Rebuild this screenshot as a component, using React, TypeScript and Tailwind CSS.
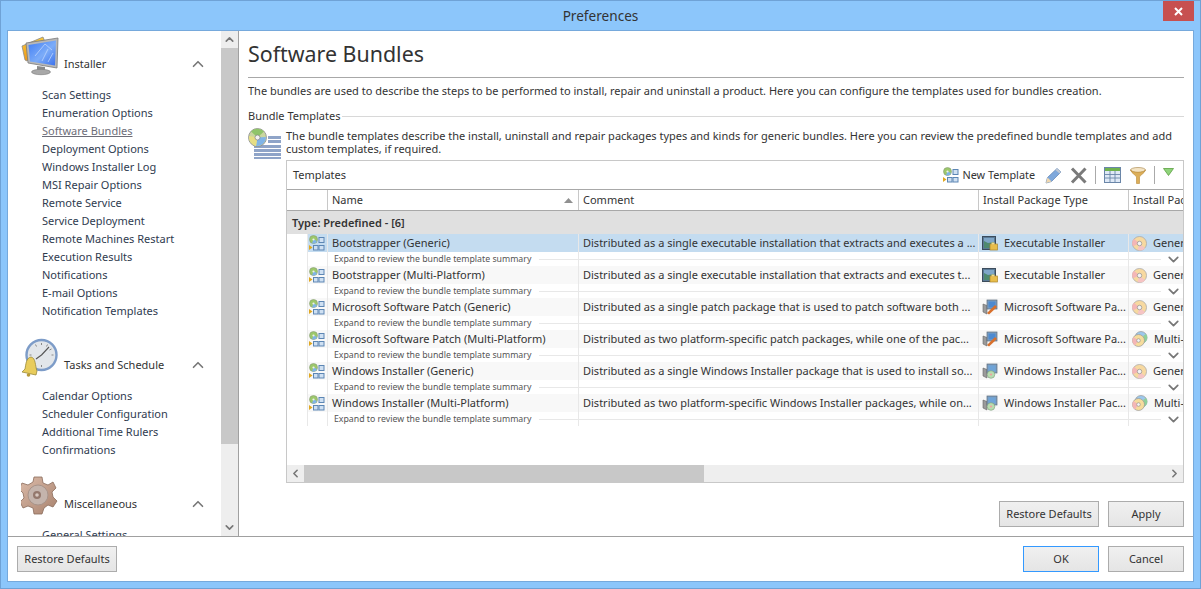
import { ChevronDown, ChevronLeft, ChevronRight, ChevronUp } from "lucide-react";

function Disc({ size = 16 }: { size?: number }) {
  return (
    <svg width={size} height={size} viewBox="0 0 16 16" className="shrink-0">
      <circle cx="8" cy="8" r="7.5" fill="#f7d9a0" stroke="#a8a8a8" strokeWidth="0.8" />
      <path d="M8 8 L2 3 A7.5 7.5 0 0 0 1 11 Z" fill="#f4b6b6" />
      <path d="M8 8 L14 13 A7.5 7.5 0 0 1 6 15 Z" fill="#f6c4c4" />
      <circle cx="8" cy="8" r="2.4" fill="#f4f4f4" stroke="#8a8a8a" strokeWidth="0.7" />
    </svg>
  );
}

function MultiDisc() {
  return (
    <svg width="16" height="16" viewBox="0 0 16 16" className="shrink-0">
      <circle cx="9" cy="6.5" r="6" fill="#9cc8ec" stroke="#9a9a9a" strokeWidth="0.7" />
      <path d="M9 6.5 L14 3 A6 6 0 0 1 12 12 Z" fill="#8fd09a" />
      <circle cx="6.5" cy="9.5" r="6" fill="#f6dc9c" stroke="#9a9a9a" strokeWidth="0.7" />
      <path d="M6.5 9.5 L1.5 6 A6 6 0 0 0 3 14.5 Z" fill="#f4b6b6" />
      <circle cx="6.5" cy="9.5" r="1.8" fill="#f4f4f4" stroke="#8a8a8a" strokeWidth="0.6" />
    </svg>
  );
}

function BundleIcon() {
  return (
    <svg width="17" height="16" viewBox="0 0 17 16" className="shrink-0">
      <circle cx="5.5" cy="4.5" r="4" fill="#9cc86a" stroke="#8a9a7a" strokeWidth="0.6" />
      <path d="M5.5 4.5 L9 6 A4 4 0 0 1 4 8.2 Z" fill="#7fb4e8" />
      <circle cx="5.5" cy="4.5" r="1.1" fill="#eee" />
      <rect x="11" y="2.5" width="5" height="5" fill="#cfe0f2" stroke="#5c86b4" />
      <path d="M1 10 L1 15 L4.5 12.5 Z" fill="#e0a820" />
      <rect x="5.5" y="10.5" width="4.5" height="4.5" fill="#cfe0f2" stroke="#5c86b4" />
      <rect x="11" y="10.5" width="5" height="4.5" fill="#cfe0f2" stroke="#5c86b4" />
    </svg>
  );
}

function ExeIcon() {
  return (
    <svg width="16" height="16" viewBox="0 0 16 16" className="shrink-0">
      <rect x="0.5" y="1.5" width="13" height="13" fill="#5a7a96" stroke="#3c4c5c" />
      <rect x="2" y="3" width="10" height="10" fill="#4f8a70" />
      <path d="M2 3 H12 V7 L6 8 L2 6 Z" fill="#7fa6c8" />
      <rect x="8" y="9" width="7.5" height="6" fill="#e8bd4a" stroke="#a8842c" strokeWidth="0.7" />
      <rect x="9.5" y="7.5" width="3" height="2" fill="#f4d98a" />
    </svg>
  );
}

function PatchIcon() {
  return (
    <svg width="16" height="16" viewBox="0 0 16 16" className="shrink-0">
      <path d="M1 5 L5 6.5 L5 15 L1 13 Z" fill="#9a9a9a" stroke="#666" strokeWidth="0.6" />
      <rect x="5" y="1" width="10" height="9" fill="#7d9ec0" stroke="#5c6c7c" strokeWidth="0.7" />
      <rect x="6.5" y="2.5" width="7" height="6" fill="#4d8ad0" />
      <path d="M5 14 L13 6 L15 8 L7 15.5 Z" fill="#d8702c" />
    </svg>
  );
}

function MsiIcon() {
  return (
    <svg width="16" height="16" viewBox="0 0 16 16" className="shrink-0">
      <path d="M1 5 L5 6.5 L5 15 L1 13 Z" fill="#9a9a9a" stroke="#666" strokeWidth="0.6" />
      <rect x="5" y="1" width="10" height="9" fill="#7d9ec0" stroke="#5c6c7c" strokeWidth="0.7" />
      <rect x="6.5" y="2.5" width="7" height="6" fill="#6fa4d8" />
      <circle cx="9" cy="11.5" r="3.8" fill="#b8dcb0" stroke="#7a9a7a" strokeWidth="0.6" />
      <circle cx="9" cy="11.5" r="1.1" fill="#f0a0a0" />
    </svg>
  );
}

function MonitorIcon() {
  return (
    <svg width="40" height="40" viewBox="0 0 40 40" className="shrink-0">
      <defs>
        <linearGradient id="screen" x1="0" y1="0" x2="1" y2="1">
          <stop offset="0" stopColor="#3f7cf4" />
          <stop offset="0.55" stopColor="#7cacf8" />
          <stop offset="1" stopColor="#3a70ec" />
        </linearGradient>
        <linearGradient id="back" x1="0" y1="0" x2="0" y2="1">
          <stop offset="0" stopColor="#f8c83a" />
          <stop offset="1" stopColor="#f09a18" />
        </linearGradient>
      </defs>
      <path d="M1 10 L22 1 L24 6 L6 25 L4 24 Z" fill="url(#back)" stroke="#8a8a8a" strokeWidth="0.8" />
      <path d="M5 7 L37 2 L36 32 L7 27 Z" fill="#b8b8b8" stroke="#7a7a7a" strokeWidth="0.8" />
      <path d="M7.5 9 L35 4.5 L34 29.5 L9 25.5 Z" fill="url(#screen)" />
      <path d="M14 20 L24 8 L31 14 M21 25 L27 13 M27 26 L32 17" stroke="#bcd4fc" strokeWidth="0.8" fill="none" />
      <path d="M16 30 L24 31 L24 35 L16 35 Z" fill="#8a8a8a" />
      <ellipse cx="20" cy="36" rx="9.5" ry="2.7" fill="#a8a8a8" stroke="#7a7a7a" strokeWidth="0.6" />
    </svg>
  );
}

function ClockIcon() {
  return (
    <svg width="38" height="40" viewBox="0 0 38 40" className="shrink-0">
      <circle cx="20.5" cy="18" r="15" fill="#e2e6ea" stroke="#7d9cc8" strokeWidth="2.4" />
      <g stroke="#888" strokeWidth="1">
        <path d="M20.5 6V8 M20.5 28v2 M8.5 18H10.5 M30.5 18h2 M14.5 7.5l1 2 M26.5 7.5l-1 2 M10.5 24l2-1 M30.5 12l-2 1" />
      </g>
      <path d="M20.5 18 L28 10 M20.5 18 L15 22" stroke="#555" strokeWidth="1.1" />
      <path d="M10 20 C5 21 5 27 4 32 L1 35 L15 38 L16 34 C14 29 15 21 10 20 Z" fill="#e8cc5c" stroke="#9a8a3a" strokeWidth="0.8" />
      <circle cx="7.5" cy="38" r="1.8" fill="#b89a3a" />
    </svg>
  );
}

function GearIcon() {
  return (
    <svg width="38" height="40" viewBox="0 0 38 40" className="shrink-0">
      <defs>
        <linearGradient id="gear" x1="0" y1="0" x2="1" y2="1">
          <stop offset="0" stopColor="#dcbcaa" />
          <stop offset="1" stopColor="#a8826e" />
        </linearGradient>
      </defs>
      <g transform="translate(-2 -1)">
        <path
          d="M15 2 L23 2 L24 8 L29 10 L34 7 L37 13 L33 17 L34 22 L38 26 L34 32 L29 30 L25 33 L23 39 L15 39 L14 33 L9 31 L4 33 L1 27 L5 23 L4 18 L0 14 L3 8 L9 10 L14 7 Z"
          fill="url(#gear)"
          stroke="#8a6c5c"
          strokeWidth="0.8"
        />
        <circle cx="19" cy="20" r="10" fill="#c4b4ac" stroke="#a8948a" />
        <circle cx="18" cy="20" r="4" fill="#94786c" />
        <circle cx="18" cy="20" r="1.8" fill="#d8c8c0" />
      </g>
    </svg>
  );
}

function DiscListIcon() {
  return (
    <svg width="33" height="32" viewBox="0 0 33 32" className="shrink-0">
      <g fill="#8fa4c8">
        <rect x="20" y="8" width="13" height="3" />
        <rect x="20" y="12" width="13" height="3" />
        <rect x="6" y="17" width="27" height="3" />
        <rect x="6" y="21" width="27" height="3" />
        <rect x="6" y="25" width="27" height="3" />
        <rect x="6" y="29" width="27" height="2" />
      </g>
      <circle cx="9.5" cy="9.5" r="9" fill="#c9d6a0" stroke="#8a8a8a" strokeWidth="0.8" />
      <path d="M9.5 9.5 L3 3.5 A9 9 0 0 1 16 3.5 Z" fill="#8fc46a" />
      <path d="M9.5 9.5 L18 9 A9 9 0 0 1 8 18 Z" fill="#7fb4e8" />
      <path d="M9.5 9.5 L8 18 A9 9 0 0 1 1 8 Z" fill="#e6de84" />
      <circle cx="9.5" cy="9.5" r="2.5" fill="#f2f2f2" stroke="#808080" strokeWidth="0.7" />
    </svg>
  );
}

function Pencil() {
  return (
    <svg width="17" height="17" viewBox="0 0 17 17">
      <path d="M1 16 L2.5 10.5 L12 1.5 L16 5 L6.5 14.5 Z" fill="#7ea8dc" stroke="#6a8cb8" strokeWidth="0.8" />
      <path d="M1 16 L2.5 10.5 L6.5 14.5 Z" fill="#f0d8b0" />
      <path d="M12 1.5 L16 5 L14.5 6.5 L10.5 3 Z" fill="#c0c8d4" />
    </svg>
  );
}

function CrossTool() {
  return (
    <svg width="17" height="17" viewBox="0 0 17 17">
      <path d="M2 1.5 L15.5 15.5 M15.5 1.5 L2 15.5" stroke="#7a7a7a" strokeWidth="3" />
    </svg>
  );
}

function GridTool() {
  return (
    <svg width="17" height="16" viewBox="0 0 17 16">
      <rect x="0.5" y="0.5" width="16" height="15" fill="#dfe9f6" stroke="#6a86a8" />
      <rect x="1" y="1" width="15" height="3" fill="#6fb24e" />
      <path d="M1 7.5H16 M1 11H16 M6 4V15 M11 4V15" stroke="#6a86a8" strokeWidth="0.9" />
    </svg>
  );
}

function Funnel() {
  return (
    <svg width="16" height="17" viewBox="0 0 16 17">
      <ellipse cx="8" cy="3" rx="7.5" ry="2.5" fill="#f4e4c4" stroke="#b89a68" strokeWidth="0.8" />
      <path d="M0.5 3 C2 7 6 8 6.5 10 L6.5 16.5 L9.5 16.5 L9.5 10 C10 8 14 7 15.5 3 C13 6 3 6 0.5 3 Z" fill="#dcae58" stroke="#b88a38" strokeWidth="0.6" />
    </svg>
  );
}

const sections = [
  {
    title: "Installer",
    icon: <MonitorIcon />,
    items: [
      "Scan Settings",
      "Enumeration Options",
      "Software Bundles",
      "Deployment Options",
      "Windows Installer Log",
      "MSI Repair Options",
      "Remote Service",
      "Service Deployment",
      "Remote Machines Restart",
      "Execution Results",
      "Notifications",
      "E-mail Options",
      "Notification Templates",
    ],
  },
  {
    title: "Tasks and Schedule",
    icon: <ClockIcon />,
    items: [
      "Calendar Options",
      "Scheduler Configuration",
      "Additional Time Rulers",
      "Confirmations",
    ],
  },
  {
    title: "Miscellaneous",
    icon: <GearIcon />,
    items: ["General Settings"],
  },
];

const rows = [
  {
    name: "Bootstrapper (Generic)",
    comment: "Distributed as a single executable installation that extracts and executes a ...",
    type: "Executable Installer",
    typeIcon: <ExeIcon />,
    pack: "Generic",
    multi: false,
    selected: true,
  },
  {
    name: "Bootstrapper (Multi-Platform)",
    comment: "Distributed as a single executable installation that extracts and executes t...",
    type: "Executable Installer",
    typeIcon: <ExeIcon />,
    pack: "Generic",
    multi: false,
  },
  {
    name: "Microsoft Software Patch (Generic)",
    comment: "Distributed as a single patch package that is used to patch software both ...",
    type: "Microsoft Software Pa...",
    typeIcon: <PatchIcon />,
    pack: "Generic",
    multi: false,
  },
  {
    name: "Microsoft Software Patch (Multi-Platform)",
    comment: "Distributed as two platform-specific patch packages, while one of the pac...",
    type: "Microsoft Software Pa...",
    typeIcon: <PatchIcon />,
    pack: "Multi-Platform",
    multi: true,
  },
  {
    name: "Windows Installer (Generic)",
    comment: "Distributed as a single Windows Installer package that is used to install so...",
    type: "Windows Installer Pac...",
    typeIcon: <MsiIcon />,
    pack: "Generic",
    multi: false,
  },
  {
    name: "Windows Installer (Multi-Platform)",
    comment: "Distributed as two platform-specific Windows Installer packages, while on...",
    type: "Windows Installer Pac...",
    typeIcon: <MsiIcon />,
    pack: "Multi-Platform",
    multi: true,
  },
];

function Btn({ label, focused, className }: { label: string; focused?: boolean; className: string }) {
  return (
    <button
      type="button"
      className={`h-[26px] border bg-gradient-to-b from-[#f0f0f0] to-[#e5e5e5] text-[#333] ${
        focused ? "border-[#3399ff]" : "border-[#acacac]"
      } ${className}`}
    >
      {label}
    </button>
  );
}

function Sidebar() {
  return (
    <div className="flex w-[231px] shrink-0 border-r border-[#a0a0a0]">
      <div className="w-[213px] overflow-hidden pt-[3px]">
        {sections.map((s) => (
          <div key={s.title} className="mb-[15px]">
            <div className="flex h-[52px] pl-[13px]">
              <div className="mt-[2px] w-[43px]">{s.icon}</div>
              <div className="mt-[21px] flex h-[18px] flex-1 items-center justify-between pr-[14px] text-[#333]">
                <span>{s.title}</span>
                <ChevronUp size={18} strokeWidth={2.2} className="text-[#777]" />
              </div>
            </div>
            <ul className="pl-[34px] text-[#2f3b4f]">
              {s.items.map((item) => (
                <li
                  key={item}
                  className={`h-[18px] leading-[18px] ${
                    item === "Software Bundles" ? "text-[#6d6d78] underline" : ""
                  }`}
                >
                  {item}
                </li>
              ))}
            </ul>
          </div>
        ))}
      </div>
      <div className="flex w-[17px] flex-col bg-[#eeeeee]">
        <div className="flex h-[17px] items-center justify-center">
          <ChevronUp size={13} strokeWidth={3} className="text-[#777]" />
        </div>
        <div className="h-[396px] bg-[#c8c8c8]" />
        <div className="flex-1" />
        <div className="flex h-[17px] items-center justify-center">
          <ChevronDown size={13} strokeWidth={3} className="text-[#777]" />
        </div>
      </div>
    </div>
  );
}

function TemplatesTable() {
  return (
    <div className="ml-[38px] flex h-[323px] flex-col overflow-hidden border border-[#c8c8c8]">
      <div className="flex h-[28px] shrink-0 items-center pl-[6px] text-[#333]">
        <span className="flex-1">Templates</span>
        <div className="flex items-center">
          <BundleIcon />
          <span className="ml-[3px] mr-[10px] text-[10.85px]">New Template</span>
          <Pencil />
          <span className="w-[8px]" />
          <CrossTool />
          <span className="mx-[8px] h-[18px] w-px bg-[#aaa]" />
          <GridTool />
          <span className="w-[9px]" />
          <Funnel />
          <span className="mx-[8px] h-[18px] w-px bg-[#aaa]" />
          <svg width="11" height="8" viewBox="0 0 11 8" className="mb-[6px] mr-[9px]">
            <path d="M0.5 0.5 H10.5 L5.5 7.5 Z" fill="#8fd47a" stroke="#5aa040" strokeWidth="0.8" />
          </svg>
        </div>
      </div>
      <div className="grid h-[22px] shrink-0 grid-cols-[41px_251px_400px_150px_1fr] border-y border-[#a8a8a8] text-[#333]">
        <div className="border-r border-[#c8c8c8]" />
        <div className="flex items-center justify-between border-r border-[#c8c8c8] pl-[4px] pr-[5px]">
          <span>Name</span>
          <svg width="9" height="5" viewBox="0 0 9 5">
            <path d="M0 5 L4.5 0 L9 5 Z" fill="#909090" />
          </svg>
        </div>
        <div className="flex items-center border-r border-[#c8c8c8] pl-[4px]">Comment</div>
        <div className="flex items-center border-r border-[#c8c8c8] pl-[4px]">Install Package Type</div>
        <div className="flex items-center overflow-hidden whitespace-nowrap pl-[4px]">Install Package Kind</div>
      </div>
      <div className="flex h-[23px] shrink-0 items-center bg-[#e0e0e0] pl-[5px] font-semibold text-[#333]">
        Type: Predefined - [6]
      </div>
      {rows.map((r) => (
        <div key={r.name} className="flex h-[32px] shrink-0">
          <div className="w-[21px] shrink-0 border-r border-[#e8e8e8]" />
          <div className="flex-1 overflow-hidden">
            <div
              className={`grid h-[18px] grid-cols-[20px_251px_400px_150px_1fr] whitespace-nowrap text-[#333] ${
                r.selected ? "bg-[#c4dcf0]" : "bg-[#f8f8f8]"
              }`}
            >
              <div className="flex items-center border-r border-[#e8e8e8]">
                <BundleIcon />
              </div>
              <div className="flex items-center overflow-hidden border-r border-[#e8e8e8] pl-[4px]">{r.name}</div>
              <div className="flex items-center overflow-hidden border-r border-[#e8e8e8] pl-[4px]">{r.comment}</div>
              <div className="flex items-center gap-[6px] overflow-hidden border-r border-[#e8e8e8] pl-[3px]">
                {r.typeIcon}
                <span>{r.type}</span>
              </div>
              <div className="flex items-center gap-[6px] overflow-hidden pl-[3px]">
                {r.multi ? <MultiDisc /> : <Disc size={15} />}
                <span>{r.pack}</span>
              </div>
            </div>
            <div className="grid h-[14px] grid-cols-[20px_251px_400px_150px_1fr] grid-rows-[14px]">
              <div className="border-r border-[#e8e8e8]" />
              <div className="flex items-center border-r border-[#e8e8e8] pl-[6px]">
                <span className="whitespace-nowrap text-[8.75px] text-[#555]">
                  Expand to review the bundle template summary
                </span>
                <span className="ml-[8px] h-px flex-1 bg-[#e8e8e8]" />
              </div>
              <div className="flex items-center border-r border-[#e8e8e8]">
                <span className="h-px flex-1 bg-[#e8e8e8]" />
              </div>
              <div className="flex items-center border-r border-[#e8e8e8]">
                <span className="h-px flex-1 bg-[#e8e8e8]" />
              </div>
              <div className="flex items-center">
                <span className="h-px flex-1 bg-[#e8e8e8]" />
                <ChevronDown size={17} strokeWidth={2.4} className="ml-[4px] mr-[1px] text-[#777]" />
              </div>
            </div>
          </div>
        </div>
      ))}
      <div className="flex-1" />
      <div className="flex h-[17px] shrink-0 items-center bg-[#eeeeee]">
        <div className="flex w-[17px] justify-center">
          <ChevronLeft size={13} strokeWidth={3} className="text-[#777]" />
        </div>
        <div className="h-full w-[400px] bg-[#c8c8c8]" />
        <div className="flex-1" />
        <div className="flex w-[17px] justify-center">
          <ChevronRight size={13} strokeWidth={3} className="text-[#777]" />
        </div>
      </div>
    </div>
  );
}

export default function App() {
  return (
    <div
      className="flex h-[589px] w-[1201px] flex-col border border-[#6fa2d6] bg-[#8cc6fb] text-[11px] leading-[14px]"
      style={{ fontFamily: '"Noto Sans", "Open Sans", sans-serif' }}
    >
      <div className="relative flex h-[29px] shrink-0 items-center justify-center text-[13.6px] text-[#333]">
        Preferences
        <div className="absolute right-[6px] top-0 flex h-[20px] w-[31px] items-center justify-center bg-[#c75050]">
          <svg width="9" height="9" viewBox="0 0 9 9">
            <path d="M1 1 L8 8 M8 1 L1 8" stroke="#fff" strokeWidth="2" />
          </svg>
        </div>
      </div>
      <div className="mx-[6px] mb-[6px] flex flex-1 flex-col overflow-hidden border border-[#76a9dc] bg-white">
        <div className="flex h-[505px] shrink-0 overflow-hidden">
          <Sidebar />
          <div className="flex-1 px-[9px] text-[#333]">
            <h1 className="mt-[8px] h-[30px] text-[21.4px] leading-[30px]">Software Bundles</h1>
            <div className="mt-[8px] h-px bg-[#a8a8a8]" />
            <p className="mt-[6px] whitespace-nowrap">
              The bundles are used to describe the steps to be performed to install, repair and uninstall a product. Here you can configure the templates used for bundles creation.
            </p>
            <div className="mt-[11px] flex items-center">
              <span>Bundle Templates</span>
              <span className="ml-[2px] h-px flex-1 bg-[#d8d8d8]" />
            </div>
            <div className="mt-[5px] flex h-[32px]">
              <DiscListIcon />
              <p className="ml-[5px] mt-[1px] leading-[13px]">
                The bundle templates describe the install, uninstall and repair packages types and kinds for generic bundles. Here you can review the predefined bundle templates and add
                <br />
                custom templates, if required.
              </p>
            </div>
            <TemplatesTable />
            <div className="mt-[18px] flex justify-end gap-[9px]">
              <Btn label="Restore Defaults" className="w-[100px]" />
              <Btn label="Apply" className="w-[76px]" />
            </div>
          </div>
        </div>
        <div className="flex flex-1 items-center justify-between border-t border-[#a0a0a0] px-[9px]">
          <Btn label="Restore Defaults" className="w-[100px]" />
          <div className="flex gap-[9px]">
            <Btn label="OK" focused className="w-[76px]" />
            <Btn label="Cancel" className="w-[76px]" />
          </div>
        </div>
      </div>
    </div>
  );
}
